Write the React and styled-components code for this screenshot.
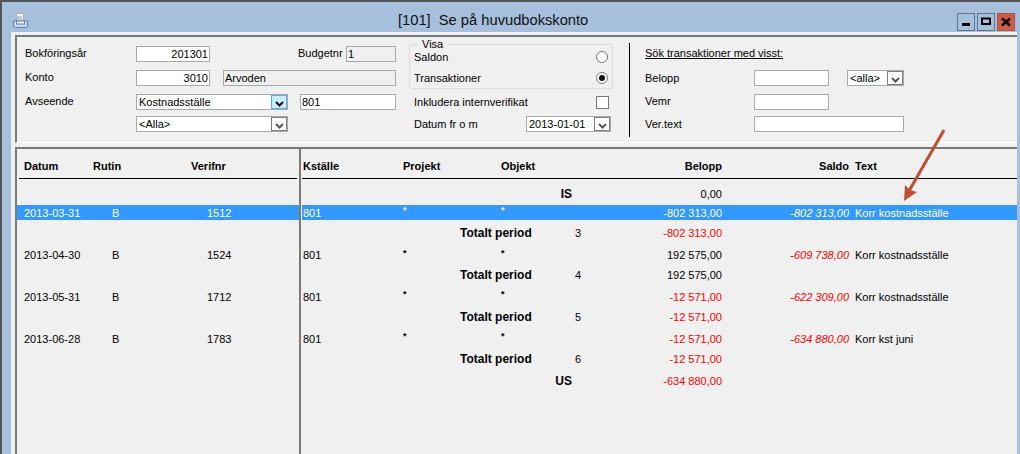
import React from "react";
import styled, { createGlobalStyle } from "styled-components";

const GlobalStyle = createGlobalStyle`
  html, body {
    margin: 0;
    padding: 0;
    background: #a6bfdc;
  }
  body {
    font-family: "Liberation Sans", Arial, sans-serif;
    font-size: 11px;
    color: #000;
  }
`;

const Window = styled.div`
  position: relative;
  width: 1020px;
  height: 454px;
  overflow: hidden;
  box-sizing: border-box;
  background: #a6bfdc;
  border-top: 2px solid #555;
  border-left: 2px solid #555;
  display: flex;
  flex-direction: column;
`;

const TitleBar = styled.div`
  height: 30px;
  flex: none;
  display: flex;
  align-items: center;
  justify-content: space-between;
  padding: 0 5px 0 11px;
  position: relative;
`;

const TitleIcon = styled.svg`
  margin-top: 7px;
`;

const TitleText = styled.div`
  position: absolute;
  left: 396px;
  top: 10px;
  font-size: 14.7px;
  color: #111;
  white-space: pre;
`;

const WindowButtons = styled.div`
  display: flex;
  gap: 2px;
  margin-top: 10px;
`;

const WinButton = styled.div`
  width: 18px;
  height: 18px;
  box-sizing: border-box;
  border: 1px solid ${(p) => (p.$close ? "#b25040" : "#5a7594")};
  background: ${(p) => (p.$close ? "#cf5a45" : "#a6bfdc")};
  display: flex;
  align-items: center;
  justify-content: center;
`;

const Body = styled.div`
  flex: 1;
  margin: 0 3px 0 9px;
  background: #f0f0f0;
  display: flex;
  flex-direction: column;
  padding-left: 4px;
  min-height: 0;
`;

const FilterPanel = styled.div`
  height: 108px;
  flex: none;
  margin-top: 3px;
  border-top: 2px solid #7a7a7a;
  border-left: 2px solid #7a7a7a;
  border-bottom: 1px solid #fff;
  box-sizing: border-box;
  display: flex;
  padding-left: 8px;
`;

const LeftForm = styled.div`
  width: 372px;
  flex: none;
  padding-top: 5px;
  display: flex;
  flex-direction: column;
`;

const FormRow = styled.div`
  display: flex;
  align-items: center;
  height: ${(p) => p.$h || 24}px;
`;

const Label = styled.div`
  width: ${(p) => p.$w || 111}px;
  flex: none;
  margin-top: ${(p) => p.$up ?? -2}px;
  margin-left: ${(p) => p.$ml || 0}px;
  white-space: nowrap;
`;

const TextBox = styled.div`
  box-sizing: border-box;
  width: ${(p) => p.$w}px;
  height: 16px;
  flex: none;
  margin-left: ${(p) => p.$ml || 0}px;
  background: ${(p) => (p.$disabled ? "#f0f0f0" : "#fff")};
  border: 1px solid #a9a9a9;
  text-align: ${(p) => (p.$right ? "right" : "left")};
  line-height: 14px;
  padding: 0 1px;
  white-space: nowrap;
  overflow: hidden;
`;

const Combo = styled.div`
  box-sizing: border-box;
  width: ${(p) => p.$w}px;
  height: 16px;
  flex: none;
  margin-left: ${(p) => p.$ml || 0}px;
  display: flex;
  background: #fff;
  border: 1px solid #a9a9a9;
  line-height: 14px;
`;

const ComboText = styled.div`
  flex: 1;
  padding-left: 2px;
  white-space: nowrap;
  overflow: hidden;
`;

const ComboButton = styled.div`
  width: 16px;
  flex: none;
  box-sizing: border-box;
  border: 1px solid ${(p) => (p.$active ? "#58aee8" : "#7f7f7f")};
  background: ${(p) => (p.$active ? "#c7ecff" : "#fff")};
  display: flex;
  align-items: flex-end;
  justify-content: center;
  padding-bottom: 1px;
`;

const VisaColumn = styled.div`
  width: 205px;
  flex: none;
  margin-left: 12px;
  padding-top: 7px;
  display: flex;
  flex-direction: column;
`;

const VisaBox = styled.div`
  box-sizing: border-box;
  width: 204px;
  height: 45px;
  border: 1px solid #dcdcdc;
  border-radius: 3px;
  padding: 1px 4px 0 4px;
  position: relative;
  display: flex;
  flex-direction: column;
  margin-bottom: 2px;
`;

const VisaLegend = styled.div`
  position: absolute;
  left: 8px;
  top: -7px;
  background: #f0f0f0;
  padding: 0 4px;
  line-height: 12px;
`;

const OptionRow = styled.div`
  display: flex;
  align-items: center;
  justify-content: space-between;
  height: 22px;
`;

const Radio = styled.div`
  box-sizing: border-box;
  width: 12px;
  height: 12px;
  border-radius: 50%;
  border: 1px solid #777;
  background: #fff;
  display: flex;
  align-items: center;
  justify-content: center;
  &::after {
    content: "";
    display: ${(p) => (p.$checked ? "block" : "none")};
    width: 6px;
    height: 6px;
    border-radius: 50%;
    background: #111;
  }
`;

const VisaRow = styled.div`
  display: flex;
  align-items: center;
  justify-content: space-between;
  height: 22px;
  padding: 0 ${(p) => p.$pr || 4}px 0 5px;
  width: 204px;
  box-sizing: border-box;
`;

const CheckBox = styled.div`
  box-sizing: border-box;
  width: 13px;
  height: 13px;
  background: #fff;
  border: 1px solid #777;
`;

const Divider = styled.div`
  width: 1px;
  height: 94px;
  flex: none;
  margin: 6px 15px 0 15px;
  background: #000;
`;

const SearchForm = styled.div`
  padding-top: 5px;
  display: flex;
  flex-direction: column;
`;

const SearchTitle = styled.div`
  text-decoration: underline;
  height: 24px;
  line-height: 22px;
  white-space: nowrap;
`;

const ListArea = styled.div`
  flex: 1;
  margin-top: 4px;
  border-top: 2px solid #7a7a7a;
  display: grid;
  grid-template-columns: 284px 1fr;
  min-height: 0;
`;

const Pane = styled.div`
  border-left: 2px solid #7a7a7a;
  min-width: 0;
`;

const RightPane = styled(Pane)`
  padding-left: 1px;
`;

const Head = styled.div`
  height: 30px;
  box-sizing: border-box;
  margin: 0 ${(p) => p.$mr || 0}px 0 ${(p) => p.$ml || 0}px;
  padding: 4px 0 0 ${(p) => p.$pl || 0}px;
  border-bottom: 1px solid #000;
  display: grid;
  grid-template-columns: ${(p) => p.$cols};
  align-items: center;
  font-weight: bold;
  white-space: nowrap;
`;

const Row = styled.div`
  height: ${(p) => p.$h}px;
  box-sizing: border-box;
  padding: ${(p) => p.$pt || 0}px 0 ${(p) => p.$pb || 0}px ${(p) => p.$pl || 0}px;
  display: grid;
  grid-template-columns: ${(p) => p.$cols};
  align-items: center;
  background: ${(p) => (p.$selected ? "#3399ff" : "transparent")};
  color: ${(p) => (p.$selected ? "#fff" : "#000")};
  white-space: nowrap;
`;

const Cell = styled.div`
  text-align: ${(p) => p.$align || "left"};
  padding-left: ${(p) => p.$pad || 0}px;
  color: ${(p) => (p.$red ? (p.$sel ? "#fff" : "#ff0000") : "inherit")};
  font-style: ${(p) => (p.$italic ? "italic" : "normal")};
  overflow: hidden;
`;

const SumLabel = styled(Cell)`
  font-size: 12px;
  font-weight: bold;
`;

const Star = styled.div`
  font-size: 9px;
  font-weight: bold;
  line-height: 13px;
  margin-top: -4px;
`;

const Arrow = styled.svg`
  position: absolute;
  left: 898px;
  top: 126px;
`;

const LEFT_COLS = "75px 87px 1fr";
const RIGHT_COLS = "100px 98px 60px 72px 89px 127px 1fr";
const PERIOD_COLS = "157px 115px 20px 127px";
const TOTAL_COLS = "269px 150px";

const Chevron = ({ dark }) => (
  <svg width="9" height="6" viewBox="0 0 9 6">
    <path d="M1 1 L4.5 4.5 L8 1" fill="none" stroke={dark ? "#111" : "#555"} strokeWidth="2" />
  </svg>
);

const rows = [
  { h: 26, pt: 4, label: "IS", belopp: "0,00" },
  { h: 15, date: "2013-03-31", ver: "1512", belopp: "-802 313,00", red: true, saldo: "-802 313,00", text: "Korr kostnadsställe", selected: true },
  { h: 24, pt: 2, period: "3", belopp: "-802 313,00", red: true },
  { h: 22, date: "2013-04-30", ver: "1524", belopp: "192 575,00", saldo: "-609 738,00", text: "Korr kostnadsställe" },
  { h: 19, pb: 2, period: "4", belopp: "192 575,00" },
  { h: 23, date: "2013-05-31", ver: "1712", belopp: "-12 571,00", red: true, saldo: "-622 309,00", text: "Korr kostnadsställe" },
  { h: 19, pb: 2, period: "5", belopp: "-12 571,00", red: true },
  { h: 23, date: "2013-06-28", ver: "1783", belopp: "-12 571,00", red: true, saldo: "-634 880,00", text: "Korr kst juni" },
  { h: 19, pb: 2, period: "6", belopp: "-12 571,00", red: true },
  { h: 24, label: "US", belopp: "-634 880,00", red: true },
];

function RightRow({ row }) {
  const sel = row.selected;
  if (row.label) {
    return (
      <Row $h={row.h} $pt={row.pt} $pl={1} $cols={TOTAL_COLS}>
        <SumLabel $align="right">{row.label}</SumLabel>
        <Cell $align="right" $red={row.red}>{row.belopp}</Cell>
      </Row>
    );
  }
  if (row.period) {
    return (
      <Row $h={row.h} $pt={row.pt} $pb={row.pb} $pl={1} $cols={PERIOD_COLS}>
        <Cell />
        <SumLabel>Totalt period</SumLabel>
        <Cell>{row.period}</Cell>
        <Cell $align="right" $red={row.red}>{row.belopp}</Cell>
      </Row>
    );
  }
  return (
    <Row $h={row.h} $pl={1} $cols={RIGHT_COLS} $selected={sel}>
      <Cell>801</Cell>
      <Star>*</Star>
      <Star>*</Star>
      <Cell />
      <Cell $align="right" $red={row.red} $sel={sel}>{row.belopp}</Cell>
      <Cell $align="right" $red $sel={sel} $italic>{row.saldo}</Cell>
      <Cell $pad={6}>{row.text}</Cell>
    </Row>
  );
}

export default function App() {
  return (
    <>
      <GlobalStyle />
      <Window>
        <TitleBar>
          <TitleIcon width="15" height="15" viewBox="0 0 15 15">
            <rect x="3.5" y="0.5" width="7" height="8" fill="#eef3f8" stroke="#c9ab8a" />
            <path d="M0.5 8 H14.5 V12.5 Q14.5 14.5 12.5 14.5 H2.5 Q0.5 14.5 0.5 12.5 Z" fill="#c8d8ea" stroke="#5f7fa6" />
            <path d="M3 4 H9 M3 6 H9" stroke="#8fa3b8" />
            <rect x="3.5" y="8" width="8" height="3" fill="#f4f7fa" stroke="#5f7fa6" />
          </TitleIcon>
          <TitleText>{"[101]  Se på huvudbokskonto"}</TitleText>
          <WindowButtons>
            <WinButton>
              <svg width="10" height="10" viewBox="0 0 10 10">
                <rect x="1" y="6" width="8" height="3" fill="#000" />
              </svg>
            </WinButton>
            <WinButton>
              <svg width="10" height="10" viewBox="0 0 10 10">
                <rect x="1" y="1.5" width="8" height="5.5" fill="none" stroke="#000" strokeWidth="2" />
              </svg>
            </WinButton>
            <WinButton $close>
              <svg width="10" height="10" viewBox="0 0 10 10">
                <path d="M1 1.5 L9 8.5 M9 1.5 L1 8.5" stroke="#000" strokeWidth="2.4" />
              </svg>
            </WinButton>
          </WindowButtons>
        </TitleBar>
        <Body>
          <FilterPanel>
            <LeftForm>
              <FormRow>
                <Label>Bokföringsår</Label>
                <TextBox $w={74} $right>201301</TextBox>
                <Label $w={48} $ml={88}>Budgetnr</Label>
                <TextBox $w={50} $disabled>1</TextBox>
              </FormRow>
              <FormRow>
                <Label>Konto</Label>
                <TextBox $w={74} $right>3010</TextBox>
                <TextBox $w={173} $ml={13} $disabled>Arvoden</TextBox>
              </FormRow>
              <FormRow>
                <Label>Avseende</Label>
                <Combo $w={152}>
                  <ComboText>Kostnadsställe</ComboText>
                  <ComboButton $active><Chevron dark /></ComboButton>
                </Combo>
                <TextBox $w={96} $ml={12}>801</TextBox>
              </FormRow>
              <FormRow $h={20}>
                <Label />
                <Combo $w={152}>
                  <ComboText>{"<Alla>"}</ComboText>
                  <ComboButton><Chevron /></ComboButton>
                </Combo>
              </FormRow>
            </LeftForm>
            <VisaColumn>
              <VisaBox>
                <VisaLegend>Visa</VisaLegend>
                <OptionRow>
                  Saldon
                  <Radio />
                </OptionRow>
                <OptionRow>
                  Transaktioner
                  <Radio $checked />
                </OptionRow>
              </VisaBox>
              <VisaRow>
                Inkludera internverifikat
                <CheckBox />
              </VisaRow>
              <VisaRow $pr={2}>
                Datum fr o m
                <Combo $w={85}>
                  <ComboText>2013-01-01</ComboText>
                  <ComboButton><Chevron /></ComboButton>
                </Combo>
              </VisaRow>
            </VisaColumn>
            <Divider />
            <SearchForm>
              <SearchTitle>Sök transaktioner med visst:</SearchTitle>
              <FormRow>
                <Label $w={109} $up={0}>Belopp</Label>
                <TextBox $w={75} />
                <Combo $w={57} $ml={18}>
                  <ComboText>{"<alla>"}</ComboText>
                  <ComboButton><Chevron /></ComboButton>
                </Combo>
              </FormRow>
              <FormRow>
                <Label $w={109}>Vemr</Label>
                <TextBox $w={75} />
              </FormRow>
              <FormRow $h={20}>
                <Label $w={109} $up={0}>Ver.text</Label>
                <TextBox $w={150} />
              </FormRow>
            </SearchForm>
          </FilterPanel>
          <ListArea>
            <Pane>
              <Head $ml={2} $mr={2} $pl={5} $cols="69px 98px 1fr">
                <div>Datum</div>
                <div>Rutin</div>
                <div>Verifnr</div>
              </Head>
              {rows.map((row, i) => (
                <Row key={i} $h={row.h} $cols={LEFT_COLS} $selected={row.selected}>
                  <Cell $pad={7}>{row.date}</Cell>
                  <Cell $pad={20}>{row.date ? "B" : ""}</Cell>
                  <Cell $pad={28}>{row.ver}</Cell>
                </Row>
              ))}
            </Pane>
            <RightPane>
              <Head $pl={1} $cols={RIGHT_COLS}>
                <div>Kställe</div>
                <div>Projekt</div>
                <div>Objekt</div>
                <div />
                <Cell $align="right">Belopp</Cell>
                <Cell $align="right">Saldo</Cell>
                <Cell $pad={6}>Text</Cell>
              </Head>
              {rows.map((row, i) => (
                <RightRow key={i} row={row} />
              ))}
            </RightPane>
          </ListArea>
        </Body>
        <Arrow width="60" height="80" viewBox="0 0 60 80">
          <path d="M44 2 L9 63" stroke="#bc4f36" strokeWidth="3" fill="none" />
          <path d="M4 73 L5 57 L10 62 L17 64 Z" fill="#bc4f36" />
        </Arrow>
      </Window>
    </>
  );
}
